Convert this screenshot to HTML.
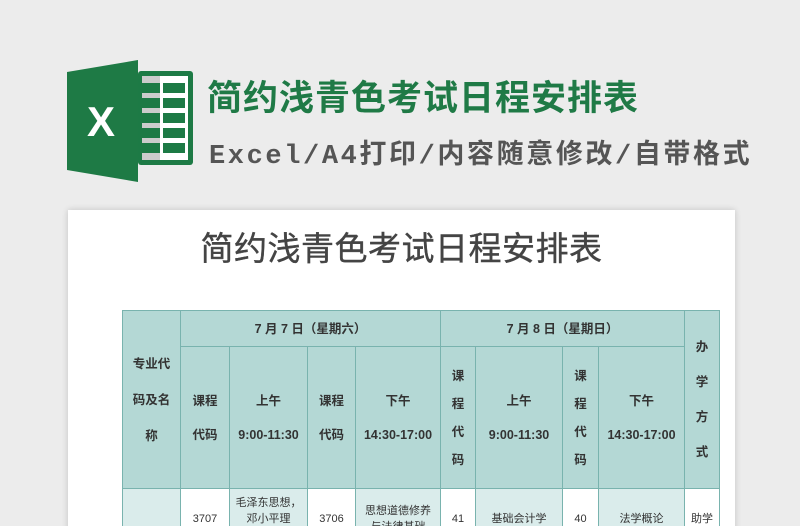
<!DOCTYPE html>
<html><head><meta charset="utf-8"><style>
html,body{margin:0;width:800px;height:526px;overflow:hidden}
body{background:#ececec;position:relative;font-family:"Liberation Sans","Noto Sans CJK SC",sans-serif}
.t1{position:absolute;left:207px;top:70px;font-size:35px;font-weight:bold;color:#1f7a46;letter-spacing:1px;white-space:nowrap}
.t2{position:absolute;left:209px;top:132px;font-size:27px;color:#555;white-space:nowrap;letter-spacing:2.6px;font-weight:bold;font-family:"Liberation Mono","Noto Sans CJK SC",monospace}
.paper{position:absolute;left:68px;top:210px;width:667px;height:330px;background:#fff;box-shadow:0 0 6px rgba(0,0,0,.18)}
.pt{position:absolute;left:0;width:667px;top:12px;text-align:center;font-size:33px;color:#444;letter-spacing:0.5px;font-weight:normal;-webkit-text-stroke:0.4px #444}
table{position:absolute;left:122px;top:310px;border-collapse:collapse;font-size:12.5px;color:#333;font-weight:bold}
td{border:1.5px solid #79b3ae;background:#b4d8d5;text-align:center;padding:0;line-height:34px}
td.w{background:#fff;font-weight:normal;line-height:16px;font-size:11px}
td.l{background:#daeceb;font-weight:normal;line-height:16px;font-size:11px}
</style></head><body>
<svg style="position:absolute;left:60px;top:55px" width="140" height="135" viewBox="60 55 140 135">
<rect x="138" y="71" width="55" height="94" rx="3" fill="#1d7a45"/>
<rect x="142" y="76" width="46" height="84" fill="#fff"/>
<rect x="142" y="76" width="18" height="84" fill="#ccc"/>
<g fill="#1d7a45">
<rect x="142" y="83" width="18" height="10"/><rect x="163" y="83" width="22" height="10"/>
<rect x="142" y="98" width="18" height="10"/><rect x="163" y="98" width="22" height="10"/>
<rect x="142" y="113" width="18" height="10"/><rect x="163" y="113" width="22" height="10"/>
<rect x="142" y="128" width="18" height="10"/><rect x="163" y="128" width="22" height="10"/>
<rect x="142" y="143" width="18" height="10"/><rect x="163" y="143" width="22" height="10"/>
</g>
<path d="M67 72 L138 60 L138 182 L67 170 Z" fill="#1e7a45"/>
<text x="101" y="136" font-family="Liberation Sans" font-weight="bold" font-size="42" fill="#fff" text-anchor="middle">X</text>
</svg>
<div class="t1">简约浅青色考试日程安排表</div>
<div class="t2">Excel/A4打印/内容随意修改/自带格式</div>
<div class="paper"><div class="pt">简约浅青色考试日程安排表</div></div>
<table>
<tr style="height:36px"><td rowspan="2" style="width:57px;line-height:36px">专业代<br>码及名<br>称</td><td colspan="4">7 月 7 日（星期六）</td><td colspan="4">7 月 8 日（星期日）</td><td rowspan="2" style="width:34px;line-height:35px">办<br>学<br>方<br>式</td></tr>
<tr style="height:142px"><td style="width:48px">课程<br>代码</td><td style="width:77px">上午<br>9:00-11:30</td><td style="width:47px">课程<br>代码</td><td style="width:84px">下午<br>14:30-17:00</td>
<td style="width:34px;line-height:28px">课<br>程<br>代<br>码</td><td style="width:86px">上午<br>9:00-11:30</td><td style="width:35px;line-height:28px">课<br>程<br>代<br>码</td><td style="width:85px">下午<br>14:30-17:00</td></tr>
<tr style="height:60px"><td class="l"><br><br>A020103</td><td class="w">3707</td><td class="l">毛泽东思想，<br>邓小平理<br>论</td><td class="w">3706</td><td class="l">思想道德修养<br>与法律基础</td><td class="w">41</td><td class="l">基础会计学</td><td class="w">40</td><td class="l">法学概论</td><td class="w">助学</td></tr>
</table>
</body></html>
